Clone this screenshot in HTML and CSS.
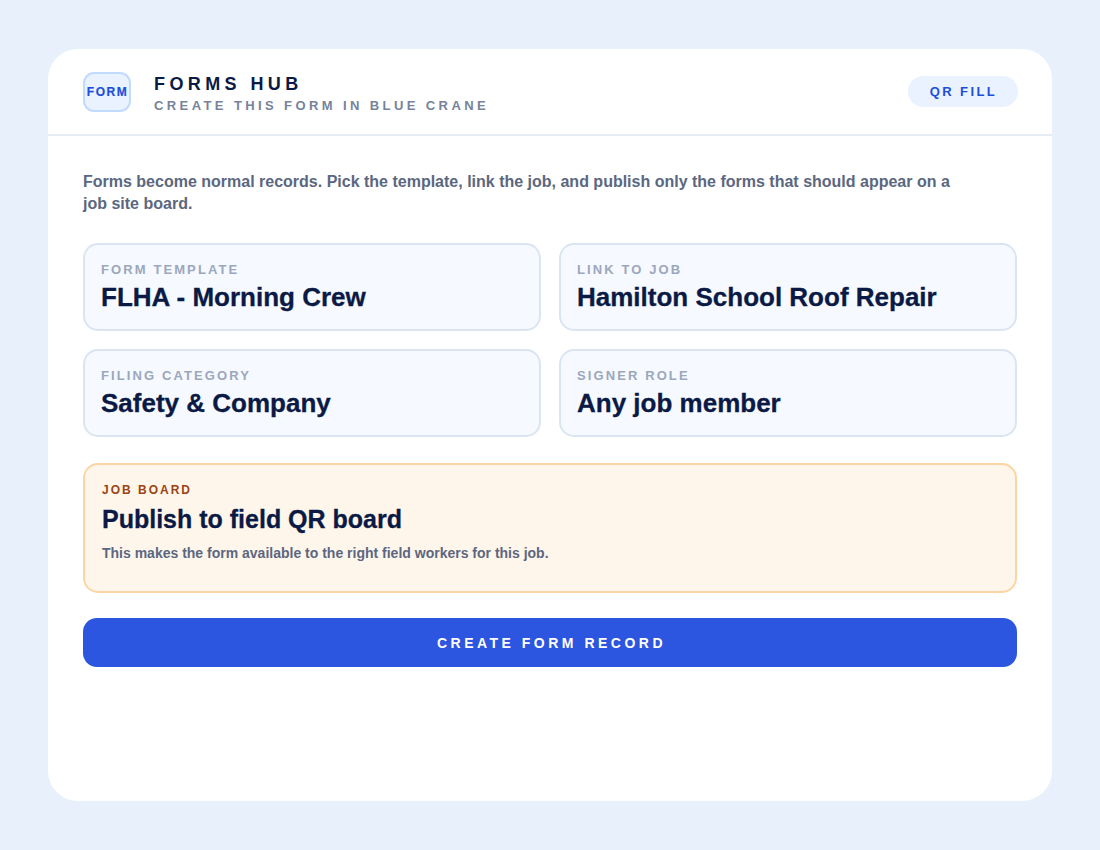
FILE: index.html
```html
<!DOCTYPE html>
<html>
<head>
<meta charset="utf-8">
<link rel="stylesheet" href="styles.css">
</head>
<body>
<div class="card">
  <header class="head">
    <div class="brand">
      <div class="logo">FORM</div>
      <div class="titles">
        <div class="title">FORMS HUB</div>
        <div class="subtitle">CREATE THIS FORM IN BLUE CRANE</div>
      </div>
    </div>
    <div class="pill">QR FILL</div>
  </header>
  <main class="body">
    <p class="desc">Forms become normal records. Pick the template, link the job, and publish only the forms that should appear on a job site board.</p>
    <div class="grid">
      <div class="field">
        <div class="label">FORM TEMPLATE</div>
        <div class="value">FLHA - Morning Crew</div>
      </div>
      <div class="field">
        <div class="label">LINK TO JOB</div>
        <div class="value">Hamilton School Roof Repair</div>
      </div>
      <div class="field">
        <div class="label">FILING CATEGORY</div>
        <div class="value">Safety &amp; Company</div>
      </div>
      <div class="field">
        <div class="label">SIGNER ROLE</div>
        <div class="value">Any job member</div>
      </div>
    </div>
    <div class="board">
      <div class="board-label">JOB BOARD</div>
      <div class="board-title">Publish to field QR board</div>
      <div class="board-desc">This makes the form available to the right field workers for this job.</div>
    </div>
    <button class="cta">CREATE FORM RECORD</button>
  </main>
</div>
</body>
</html>
```

FILE: styles.css
```css
* { box-sizing: border-box; }
html, body { margin: 0; padding: 0; }
body {
  background: #e8f0fb;
  font-family: "Liberation Sans", Arial, sans-serif;
  width: 1100px;
  height: 850px;
  padding: 49px 48px;
}
.card {
  background: #ffffff;
  border-radius: 30px;
  height: 752px;
  overflow: hidden;
}
.head {
  height: 87px;
  border-bottom: 2px solid #e6ecf4;
  display: flex;
  align-items: center;
  justify-content: space-between;
  padding: 0 34px 0 35px;
}
.brand { display: flex; align-items: center; gap: 23px; }
.logo {
  width: 48px;
  height: 40px;
  border-radius: 11px;
  background: #eaf2ff;
  border: 2px solid #c2dafd;
  color: #1d4ed8;
  font-weight: 700;
  font-size: 12px;
  letter-spacing: 1.5px;
  display: flex;
  align-items: center;
  justify-content: center;
  padding-left: 1px;
  -webkit-text-stroke: 0.2px #1d4ed8;
}
.titles { display: flex; flex-direction: column; padding-top: 5px; }
.title {
  font-size: 18px;
  font-weight: 700;
  letter-spacing: 4.4px;
  color: #0b1a45;
  line-height: 20px;
}
.subtitle {
  margin-top: 4px;
  font-size: 13px;
  font-weight: 700;
  letter-spacing: 3.4px;
  color: #76839b;
  line-height: 16px;
}
.pill {
  width: 110px;
  height: 31px;
  border-radius: 16px;
  background: #eaf2ff;
  color: #1d4ed8;
  font-weight: 700;
  font-size: 13px;
  letter-spacing: 2.4px;
  display: flex;
  align-items: center;
  justify-content: center;
  padding-left: 1px;
}
.body { padding: 0 35px; }
.desc {
  margin: 35px 0 0;
  max-width: 880px;
  font-size: 16px;
  font-weight: 700;
  line-height: 22px;
  color: #5b6780;
}
.grid {
  margin-top: 28px;
  display: grid;
  grid-template-columns: 1fr 1fr;
  gap: 18px;
}
.field {
  border: 2px solid #dbe5f2;
  border-radius: 15px;
  background: #f6f9ff;
  padding: 18px 16px 17px;
}
.label {
  font-size: 13px;
  font-weight: 700;
  letter-spacing: 2.1px;
  color: #9ba7bc;
  line-height: 14px;
}
.value {
  margin-top: 5px;
  font-size: 26px;
  font-weight: 700;
  color: #0b1a45;
  line-height: 30px;
  -webkit-text-stroke: 0.3px #0b1a45;
}
.board {
  margin-top: 26px;
  height: 130px;
  border: 2px solid #fdd5a5;
  border-radius: 15px;
  background: #fff6eb;
  padding: 18px 17px 0;
}
.board-label {
  font-size: 12px;
  font-weight: 700;
  letter-spacing: 2px;
  color: #9a4413;
  line-height: 14px;
}
.board-title {
  margin-top: 7px;
  font-size: 25px;
  font-weight: 700;
  color: #0b1a45;
  line-height: 30px;
  -webkit-text-stroke: 0.3px #0b1a45;
}
.board-desc {
  margin-top: 10px;
  font-size: 14px;
  font-weight: 700;
  color: #5b6780;
  line-height: 18px;
}
.cta {
  margin-top: 25px;
  width: 100%;
  height: 49px;
  border: none;
  border-radius: 14px;
  background: #2c55e0;
  color: #ffffff;
  font-family: "Liberation Sans", Arial, sans-serif;
  font-size: 14px;
  font-weight: 700;
  letter-spacing: 3.5px;
  padding: 0 0 0 3px;
  display: block;
}
```
